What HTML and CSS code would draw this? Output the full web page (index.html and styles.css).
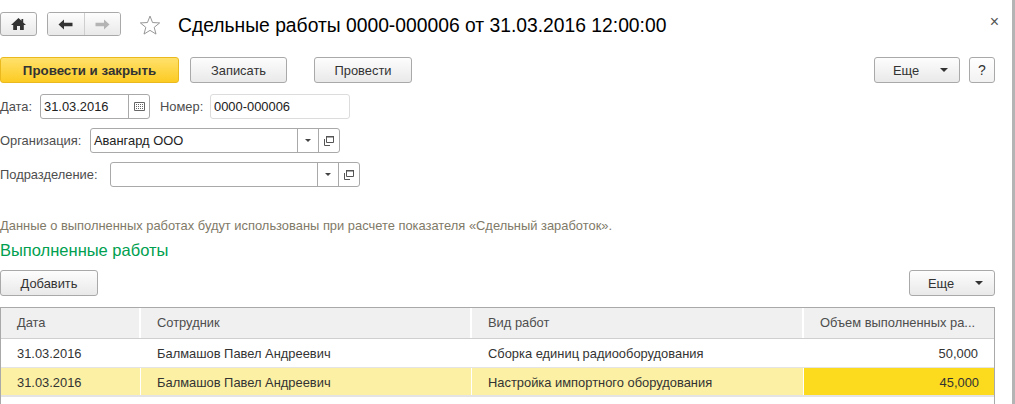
FILE: index.html
```html
<!DOCTYPE html>
<html lang="ru">
<head>
<meta charset="utf-8">
<title>Сдельные работы</title>
<link rel="stylesheet" href="styles.css">
</head>
<body>
<div class="page">
  <header class="titlebar">
    <button class="btn icon home" aria-label="Главная">
      <svg width="15" height="12" viewBox="0 0 15 12"><path d="M7.5 0 L10.5 2.8 V1 H12.2 V4.4 L15 7 H12.8 V12 H9 V8 H6 V12 H2.2 V7 H0 Z" fill="#333"/></svg>
    </button>
    <div class="navgroup">
      <button class="navbtn" aria-label="Назад">
        <svg width="15" height="11" viewBox="0 0 15 11"><path d="M0.5 5.5 L6 0.5 V3.8 H14.5 V7.2 H6 V10.5 Z" fill="#333"/></svg>
      </button>
      <button class="navbtn" aria-label="Вперед">
        <svg width="15" height="11" viewBox="0 0 15 11"><path d="M14.5 5.5 L9 0.5 V3.8 H0.5 V7.2 H9 V10.5 Z" fill="#b4b4b4"/></svg>
      </button>
    </div>
    <svg class="star" width="22" height="20" viewBox="0 0 24 22"><path d="M12 1.2 L14.8 8.3 L22.6 8.7 L16.6 13.6 L18.6 21 L12 16.9 L5.4 21 L7.4 13.6 L1.4 8.7 L9.2 8.3 Z" fill="none" stroke="#8c8c8c" stroke-width="1"/></svg>
    <h1 class="title">Сдельные работы 0000-000006 от 31.03.2016 12:00:00</h1>
    <span class="close">×</span>
  </header>

  <div class="toolbar">
    <button class="btn primary">Провести и закрыть</button>
    <button class="btn w-save">Записать</button>
    <button class="btn w-post">Провести</button>
    <button class="btn more top-more">Еще<span class="caret"></span></button>
    <button class="btn help">?</button>
  </div>

  <div class="formrow first">
    <label class="lbl lbl-date">Дата:</label>
    <div class="field f-date"><span class="val">31.03.2016</span><span class="cell">
      <svg width="11" height="9" viewBox="0 0 11 9"><path d="M0.5 0.5 H10.5 V8.5 H0.5 Z" fill="none" stroke="#666"/><path d="M2 2.5 H9 M2 4.5 H9 M2 6.5 H9" stroke="#666" stroke-dasharray="1 1"/></svg>
    </span></div>
    <label class="lbl lbl-num">Номер:</label>
    <div class="field f-num"><span class="val">0000-000006</span></div>
  </div>

  <div class="formrow org">
    <label class="lbl lbl-org">Организация:</label>
    <div class="field f-wide"><span class="val">Авангард ООО</span>
      <span class="cell"><span class="tiny-caret"></span></span>
      <span class="cell">
        <svg width="10" height="10" viewBox="0 0 10 10"><path d="M2.5 1 H9.5 V6.5 H2.5 Z" fill="none" stroke="#555"/><path d="M2 0.5 H10" stroke="#555"/><path d="M0.5 3 V9.5 H6" fill="none" stroke="#555"/></svg>
      </span>
    </div>
  </div>

  <div class="formrow dept">
    <label class="lbl lbl-dept">Подразделение:</label>
    <div class="field f-wide"><span class="val"></span>
      <span class="cell"><span class="tiny-caret"></span></span>
      <span class="cell">
        <svg width="10" height="10" viewBox="0 0 10 10"><path d="M2.5 1 H9.5 V6.5 H2.5 Z" fill="none" stroke="#555"/><path d="M2 0.5 H10" stroke="#555"/><path d="M0.5 3 V9.5 H6" fill="none" stroke="#555"/></svg>
      </span>
    </div>
  </div>

  <p class="note">Данные о выполненных работах будут использованы при расчете показателя «Сдельный заработок».</p>
  <h2 class="section">Выполненные работы</h2>

  <div class="tabletools">
    <button class="btn add">Добавить</button>
    <button class="btn more table-more">Еще<span class="caret"></span></button>
  </div>

  <div class="grid">
    <div class="gridrow head">
      <div class="c">Дата</div><div class="c">Сотрудник</div><div class="c">Вид работ</div><div class="c">Объем выполненных ра...</div>
    </div>
    <div class="gridrow">
      <div class="c">31.03.2016</div><div class="c">Балмашов Павел Андреевич</div><div class="c">Сборка единиц радиооборудования</div><div class="c num">50,000</div>
    </div>
    <div class="gridrow selected">
      <div class="c">31.03.2016</div><div class="c">Балмашов Павел Андреевич</div><div class="c">Настройка импортного оборудования</div><div class="c num current">45,000</div>
    </div>
  </div>
</div>
</body>
</html>
```

FILE: styles.css
```css
* { box-sizing: border-box; }
html, body { margin: 0; padding: 0; height: 100%; overflow: hidden; background: #fff; }
body { font-family: "Liberation Sans", Arial, sans-serif; font-size: 12.9px; color: #333; }
.page { width: 1015px; height: 404px; border-right: 3px solid #b4b4b4; overflow: hidden; }

.btn {
  height: 26px; padding: 0; font: inherit; color: #333; border: 1px solid #a9a9a9; border-radius: 3px;
  background: linear-gradient(#fdfdfd, #e9e9e9); display: flex; align-items: center; justify-content: center;
}

.titlebar { display: flex; align-items: center; height: 24px; margin-top: 12px; }
.home { width: 37px; height: 24px; }
.navgroup { display: flex; width: 74px; height: 24px; margin-left: 10px; border: 1px solid #a9a9a9; border-radius: 3px; overflow: hidden; }
.navbtn { flex: 1; padding: 0; border: 0; background: linear-gradient(#fdfdfd, #e9e9e9); display: flex; align-items: center; justify-content: center; }
.navbtn + .navbtn { border-left: 1px solid #cfcfcf; }
.star { margin: 2px 0 0 18px; }
.title { margin: 4px 0 0 17px; font-size: 19.3px; font-weight: 400; color: #000; white-space: nowrap; }
.close { margin-left: auto; margin-right: 13px; font-size: 16px; color: #555; line-height: 16px; margin-top: -5px; }

.toolbar { display: flex; margin-top: 21px; height: 26px; }
.primary { width: 179px; font-weight: 700; font-size: 13.3px; border-color: #eab91e; background: linear-gradient(#ffe16b, #fccb23); }
.w-save { width: 97px; margin-left: 11px; }
.w-post { width: 98px; margin-left: 27px; }
.more { position: relative; justify-content: flex-start; }
.top-more { width: 86px; margin-left: auto; padding-left: 18px; }
.help { width: 26px; margin-left: 9px; margin-right: 17px; font-size: 14px; background: linear-gradient(#fff, #f2f2f2); }
.caret { position: absolute; right: 11px; top: 10px; border: 4px solid transparent; border-top: 4px solid #333; border-bottom: 0; }

.formrow { display: flex; align-items: center; height: 25px; }
.first { margin-top: 11px; }
.org { margin-top: 9px; }
.dept { margin-top: 9px; }
.lbl { color: #4d4d4d; white-space: nowrap; }
.lbl-date { width: 40px; }
.lbl-num { width: 50px; margin-left: 10px; }
.lbl-org { width: 90px; }
.lbl-dept { width: 110px; }
.field { display: flex; height: 25px; background: #fff; border: 1px solid #a9a9a9; border-radius: 3px; color: #222; }
.val { flex: 1; padding-left: 3px; line-height: 23px; white-space: nowrap; }
.cell { width: 21px; border-left: 1px solid #a9a9a9; display: flex; align-items: center; justify-content: center; }
.f-date { width: 110px; }
.f-num { width: 140px; border-color: #dcdcdc; }
.f-wide { width: 250px; }
.tiny-caret { border: 3px solid transparent; border-top: 3px solid #444; border-bottom: 0; }

.note { margin: 31px 0 0; height: 16px; line-height: 16px; color: #7f7a68; }
.section { margin: 6px 0 0; height: 20px; font-size: 16.5px; line-height: 20px; font-weight: 400; color: #00a050; }

.tabletools { display: flex; justify-content: space-between; margin-top: 10px; height: 26px; padding-right: 17px; }
.add { width: 98px; }
.table-more { width: 86px; padding-left: 18px; }

.grid { margin-top: 11px; width: 995px; height: 100px; border: 1px solid #a9a9a9; border-bottom: 0; }
.gridrow { display: grid; grid-template-columns: 140px 331px 332px 1fr; grid-template-rows: minmax(0, 1fr); height: 29px; border-bottom: 1px solid #e4e4e4; }
.gridrow .c { padding: 1px 15px 0 16px; line-height: 27px; white-space: nowrap; overflow: hidden; color: #333; border-right: 1px solid transparent; }
.head { height: 31px; border-bottom: 1px solid #cfcfcf; background: #f0f0f0; }
.gridrow.head .c { padding: 0 0 0 16px; color: #4d4d4d; line-height: 29px; border-right: 2px solid #fff; }
.gridrow.head .c:last-child { border-right: 0; }
.num { text-align: right; }
.selected { background: #fbf0a3; height: 29px; border-bottom: 2px solid #e4e4e4; }
.selected .c { border-right: 1px solid #fff; }
.selected .c:last-child { border-right: 0; }
.current { background: #fcdb1e; }
```
